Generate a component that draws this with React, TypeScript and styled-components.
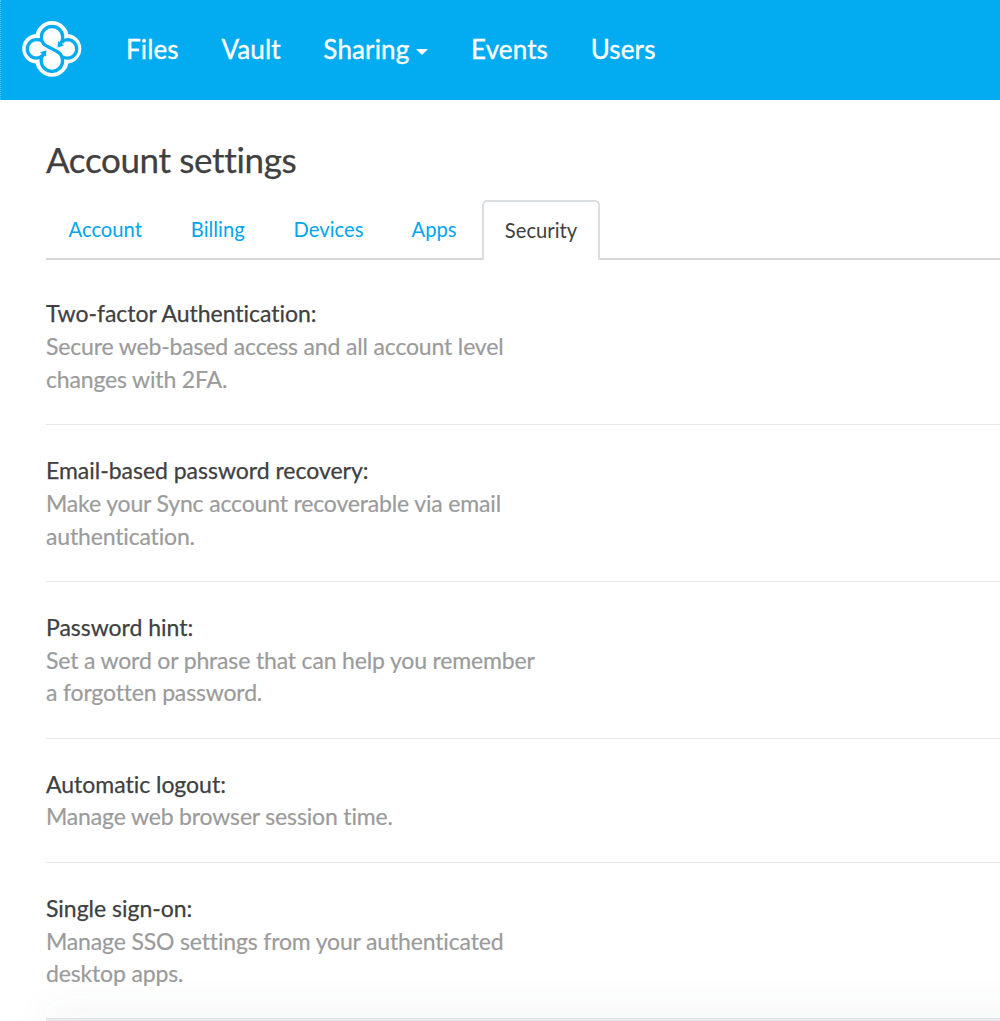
import React from "react";
import styled, { createGlobalStyle } from "styled-components";

const Global = createGlobalStyle`
  * { box-sizing: border-box; }
  body {
    margin: 0;
    background: #fff;
    font-family: Lato, "Liberation Sans", sans-serif;
    font-variant-ligatures: none;
    color: #404040;
  }
`;

const Page = styled.div`
  position: relative;
  height: 1021px;
  overflow: hidden;
  display: flex;
  flex-direction: column;
`;

const TopBar = styled.header`
  height: 100px;
  flex: none;
  display: flex;
  align-items: center;
  padding: 0 0 2px 19px;
  background: #03acf1;
  border-left: 1px dotted #4fc4f5;
`;

const Logo = styled.svg`
  width: 64px;
  height: 62px;
  margin-right: 42px;
  flex: none;
`;

const Nav = styled.nav`
  display: flex;
  gap: 42.7px;
`;

const NavLink = styled.a`
  display: flex;
  align-items: center;
  color: #fff;
  font-size: 26px;
  line-height: 36px;
  letter-spacing: 0.14px;
  white-space: nowrap;
  -webkit-text-stroke: 0.35px #fff;
`;

const Caret = styled.span`
  margin: 5px 0 0 7px;
  border: 6px solid transparent;
  border-top-color: #fff;
  border-bottom: 0;
`;

const Content = styled.main`
  padding: 36px 0 0 46px;
`;

const Title = styled.h1`
  margin: 0;
  font-size: 35px;
  line-height: 46px;
  font-weight: 400;
  letter-spacing: -0.36px;
  -webkit-text-stroke: 0.25px #404040;
`;

const Tabs = styled.div`
  display: flex;
  height: 60px;
  margin-top: 18px;
`;

const Tab = styled.a<{ $w: number; $active?: boolean }>`
  width: ${(p) => p.$w}px;
  flex: none;
  display: flex;
  justify-content: center;
  font-size: 20.2px;
  line-height: ${(p) => (p.$active ? 56 : 58)}px;
  color: ${(p) => (p.$active ? "#404040" : "#03a5ee")};
  border: ${(p) => (p.$active ? "2px solid #dcdfe1" : "0")};
  border-bottom: ${(p) => (p.$active ? "0" : "2px solid #d6d6d6")};
  border-radius: ${(p) => (p.$active ? "5px 5px 0 0" : "0")};
`;

const TabRule = styled.div`
  flex: 1;
  border-bottom: 2px solid #d6d6d6;
`;

const Setting = styled.section<{ $h: number }>`
  height: ${(p) => p.$h}px;
  padding-top: 28.8px;
  border-bottom: 1px solid #e8e8e8;
`;

const Name = styled.h2`
  margin: 0;
  font-size: 23px;
  line-height: 32.7px;
  font-weight: 400;
  letter-spacing: -0.02px;
  -webkit-text-stroke: 0.25px #404040;
`;

const Description = styled.p`
  margin: 0;
  width: 500px;
  font-size: 23px;
  line-height: 32.7px;
  letter-spacing: -0.16px;
  color: #9b9b9b;
  -webkit-text-stroke: 0.2px #9b9b9b;
`;

const List = styled.div`
  padding-top: 8.6px;
`;

const BottomShade = styled.div`
  position: absolute;
  left: 46px;
  right: -60px;
  bottom: -3px;
  height: 6px;
  border-top: 1px solid #dfe3e7;
  background: #e8ecf0;
  box-shadow: 0 0 40px rgba(60, 75, 90, 0.24);
`;

const settings = [
  { name: "Two-factor Authentication:", lines: ["Secure web-based access and all account level", "changes with 2FA."], h: 156.75 },
  { name: "Email-based password recovery:", lines: ["Make your Sync account recoverable via email", "authentication."], h: 156.75 },
  { name: "Password hint:", lines: ["Set a word or phrase that can help you remember", "a forgotten password."], h: 156.75 },
  { name: "Automatic logout:", lines: ["Manage web browser session time."], h: 124.2 },
  { name: "Single sign-on:", lines: ["Manage SSO settings from your authenticated", "desktop apps."], h: 156.75 },
];

export default function App() {
  return (
    <Page>
      <Global />
      <TopBar>
        <Logo viewBox="20 18 64 62" fill="none">
          <g fill="#fff">
            <circle cx="52" cy="37.7" r="16.7" />
            <circle cx="52" cy="60" r="16.7" />
            <circle cx="37" cy="48.8" r="14.8" />
            <circle cx="66.5" cy="48.8" r="14.8" />
          </g>
          <g stroke="#03acf1" strokeWidth="3.3">
            <path d="M60.7 43.5 A10.7 10.7 0 1 0 43.4 43.5 C46.5 47.5 57.5 50.2 60.5 54.3 A10.7 10.7 0 1 1 43.3 54.3" />
            <path d="M42 40.9 Q39.7 39.7 36.5 39.7 A9.2 9.2 0 0 0 36.5 58.1 Q40 58 42.2 55.5" />
            <path d="M62 56.9 Q64.3 58.1 67.5 58.1 A9.2 9.2 0 0 0 67.5 39.7 Q64 39.8 61.8 42.3" />
          </g>
          <g fill="#03acf1">
            <path d="M40 52.3 L46.4 50.2 L46 56.8Z" />
            <path d="M64 45.5 L57.6 47.6 L58 41Z" />
          </g>
        </Logo>
        <Nav>
          <NavLink>Files</NavLink>
          <NavLink>Vault</NavLink>
          <NavLink>Sharing<Caret /></NavLink>
          <NavLink>Events</NavLink>
          <NavLink>Users</NavLink>
        </Nav>
      </TopBar>
      <Content>
        <Title>Account settings</Title>
        <Tabs>
          <Tab $w={118.5}>Account</Tab>
          <Tab $w={106.5}>Billing</Tab>
          <Tab $w={115}>Devices</Tab>
          <Tab $w={96}>Apps</Tab>
          <Tab $w={118} $active>Security</Tab>
          <TabRule />
        </Tabs>
        <List>
          {settings.map((s) => (
            <Setting key={s.name} $h={s.h}>
              <Name>{s.name}</Name>
              <Description>{s.lines[0]}{s.lines[1] && <br />}{s.lines[1]}</Description>
            </Setting>
          ))}
        </List>
      </Content>
      <BottomShade />
    </Page>
  );
}
